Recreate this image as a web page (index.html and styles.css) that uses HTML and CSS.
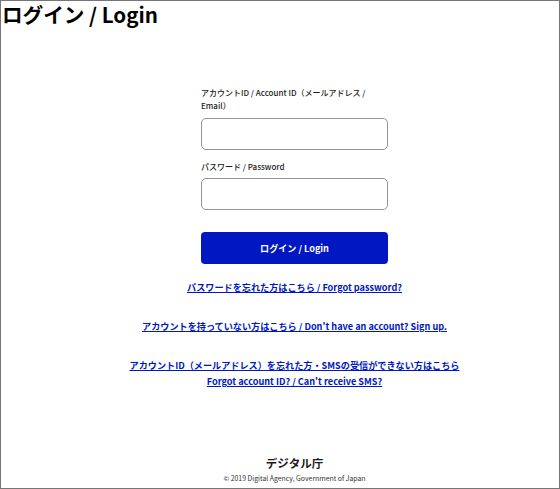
FILE: index.html
```html
<!DOCTYPE html>
<html lang="ja">
<head>
<meta charset="utf-8">
<title>ログイン / Login</title>
<link rel="stylesheet" href="styles.css">
</head>
<body>
<div class="page">
  <h1 class="title">ログイン / Login</h1>
  <main class="main">
    <form class="form">
      <label class="label" for="acc">アカウントID / Account ID（メールアドレス /<br>Email）</label>
      <input class="input" id="acc" type="text">
      <label class="label label-pw" for="pw">パスワード / Password</label>
      <input class="input input-pw" id="pw" type="password">
      <button class="btn" type="button">ログイン / Login</button>
    </form>
    <div class="links">
      <a class="link link-first" href="#">パスワードを忘れた方はこちら / Forgot password?</a>
      <a class="link" href="#">アカウントを持っていない方はこちら / Don't have an account? Sign up.</a>
      <a class="link" href="#">アカウントID（メールアドレス）を忘れた方・SMSの受信ができない方はこちら<br>Forgot account ID? / Can't receive SMS?</a>
    </div>
  </main>
  <footer class="footer">
    <div class="brand">デジタル庁</div>
    <div class="copy">© 2019 Digital Agency, Government of Japan</div>
  </footer>
</div>
</body>
</html>
```

FILE: styles.css
```css
html, body {
  margin: 0;
  padding: 0;
  background: #fff;
}
body {
  font-family: "Noto Sans CJK JP", "Noto Sans", sans-serif;
  color: #1a1a1a;
}
.page {
  height: 489px;
  box-sizing: border-box;
  border: 1px solid #767676;
  display: flex;
  flex-direction: column;
}
.title {
  margin: 0;
  padding-left: 1px;
  font-size: 20.6px;
  line-height: 26px;
  font-weight: 700;
  color: #000;
}
.main {
  display: flex;
  flex-direction: column;
  align-items: center;
  padding-left: 29px;
}
.form {
  width: 187px;
  margin-top: 58.5px;
  display: flex;
  flex-direction: column;
}
.label {
  font-size: 8px;
  line-height: 13px;
  font-weight: 500;
  color: #1a1a1a;
}
.input {
  box-sizing: border-box;
  width: 187px;
  height: 32px;
  margin: 6.5px 0 0;
  border: 1px solid #949494;
  border-radius: 5px;
  background: #fff;
}
.label-pw {
  margin-top: 9.5px;
}
.input-pw {
  margin-top: 5.5px;
}
.btn {
  margin-top: 22px;
  height: 32px;
  width: 187px;
  border: none;
  border-radius: 4px;
  background: #0017c1;
  color: #fff;
  font-family: inherit;
  font-size: 9.1px;
  font-weight: 700;
}
.links {
  display: flex;
  flex-direction: column;
  align-items: center;
}
.link {
  display: block;
  text-align: center;
  margin-top: 23px;
  font-size: 9.15px;
  line-height: 16px;
  font-weight: 700;
  color: #0017c1;
  text-decoration: underline;
}
.link-first {
  margin-top: 15px;
}
.footer {
  margin-top: auto;
  padding: 0 0 5px 29px;
  text-align: center;
}
.brand {
  font-size: 11.5px;
  line-height: 16px;
  font-weight: 700;
  color: #1a1a1a;
}
.copy {
  margin-top: 2px;
  font-size: 6.9px;
  line-height: 10px;
  color: #333;
}
```
